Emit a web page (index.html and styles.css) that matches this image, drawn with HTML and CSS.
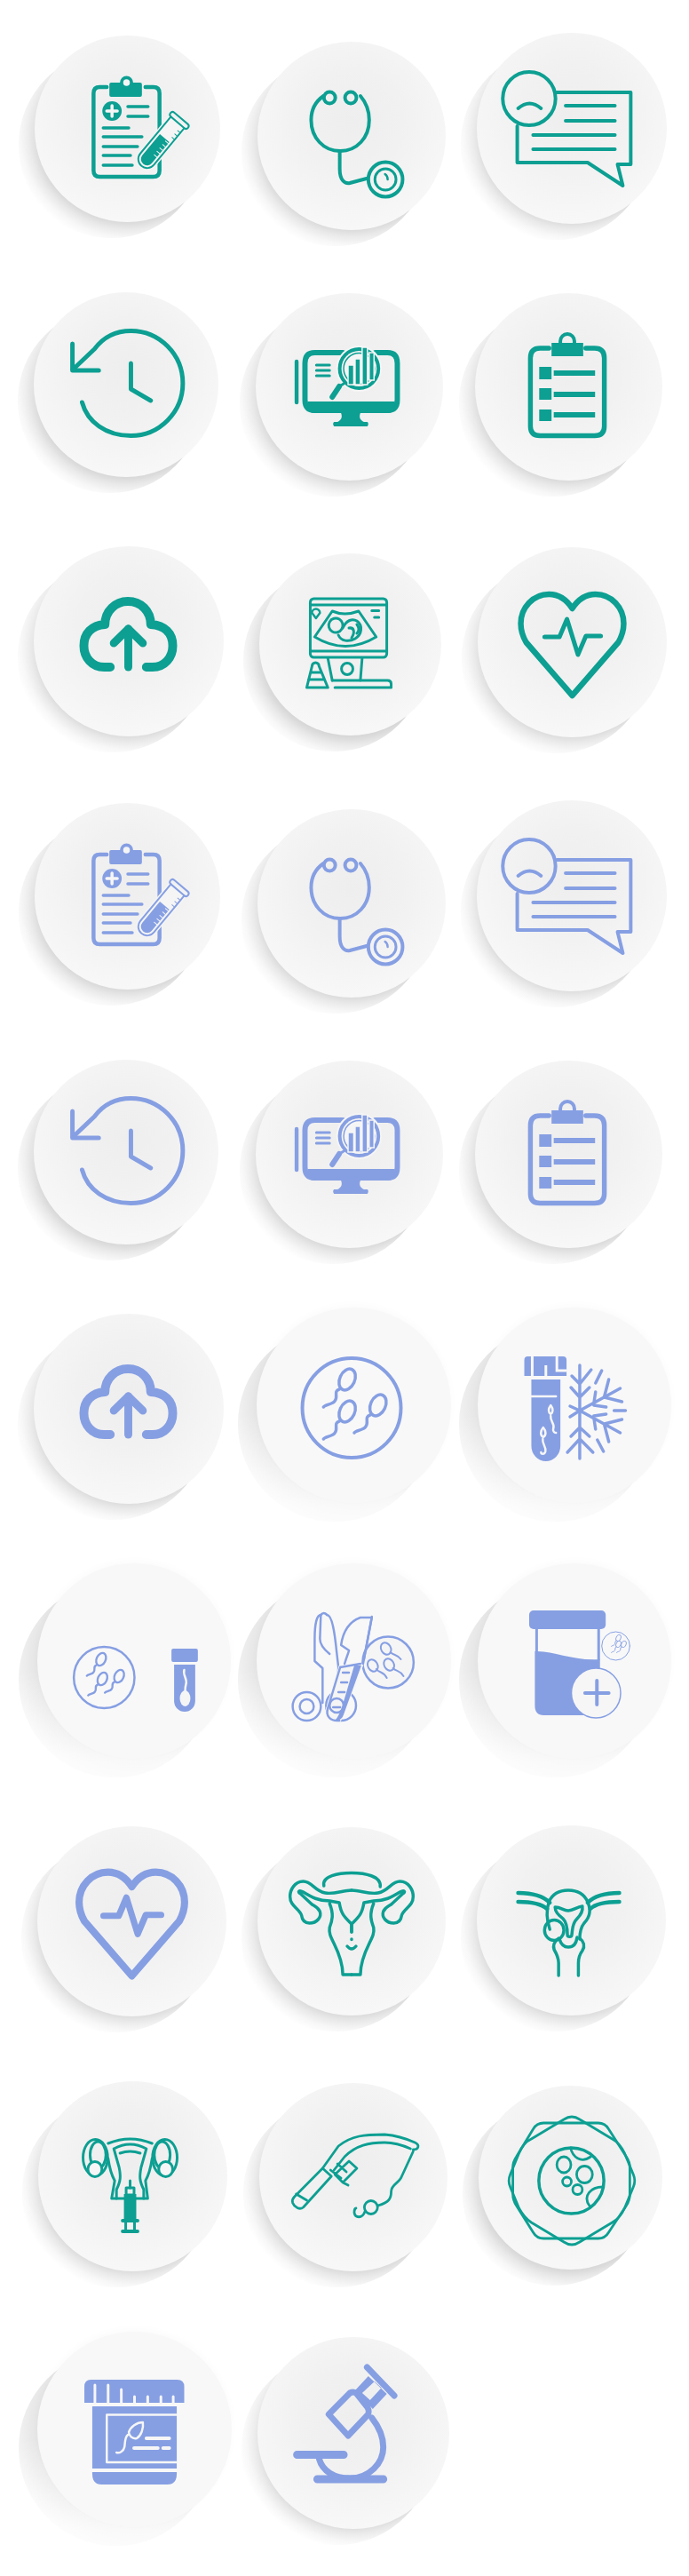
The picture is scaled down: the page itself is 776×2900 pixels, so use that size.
FILE: index.html
```html
<!DOCTYPE html>
<html lang="en">
<head>
<meta charset="utf-8">
<title>Icons</title>
<link rel="stylesheet" href="styles.css">
</head>
<body>
<svg class="defs" width="0" height="0" aria-hidden="true">
<defs>
  <g id="sperm" class="ln"><ellipse cx="0" cy="0" rx="8.5" ry="12.5" transform="rotate(25)"/><path d="M-9 11C-16 13-10 20-14 24C-16 28-25 28-27 31"/></g>

  <g id="clip">
    <path class="ln" stroke-width="4.500" d="M121 98H113Q106 98 106 105V192Q106 199 113 199H174Q181 199 181 192V105Q181 98 174 98H165"/>
    <rect class="fl" x="124" y="93" width="37" height="16" rx="2"/>
    <circle class="fl" cx="143.500" cy="93" r="7.500"/><circle class="bgf" cx="143.500" cy="93" r="3.800"/>
    <circle class="fl" cx="127" cy="125" r="11"/>
    <path class="wh" stroke-width="3.500" d="M127 119V131M121 125H133"/>
    <path class="ln" stroke-width="3.500" d="M145 120H168M145 131H168M117 144H146M117 154H161M117 165H156M117 175H148M117 186H150"/>
    <g transform="translate(203.500,135.500) rotate(40)">
      <path class="halo" stroke-width="5" d="M-10 3V57A10 10 0 0 0 10 57V3Z"/>
      <path class="ln" stroke-width="2" d="M-10 3V57A10 10 0 0 0 10 57V3"/>
      <path class="fl" d="M-7 26H7V57A7 7 0 0 1-7 57Z"/>
      <path class="wh" stroke-width="1" d="M3 28H7M3 33H7M3 38H7M3 43H7M3 48H7"/>
      <rect class="ln" stroke-width="2" x="-13" y="-3" width="26" height="6" rx="3"/>
      <path class="ln" stroke-width="1" d="M6 10H9M6 15H9M6 20H9"/>
    </g>
  </g>

  <g id="steth" class="ln" stroke-width="4">
    <circle cx="375" cy="110" r="6.500"/><circle cx="399" cy="110" r="6.500"/>
    <path d="M368 108C358 115 354 124 354 135C354 155 368 170 387 170C406 170 420 155 420 135C420 124 416 115 410 108"/>
    <path d="M386.500 170V190C386.500 203 392 207 398 206L417 201"/>
    <circle cx="438.500" cy="202" r="19.500"/><circle cx="438.500" cy="202" r="12" stroke-width="3"/>
    <path stroke-width="2.500" d="M438 196C441 198 441 200 441 202"/>
  </g>

  <g id="bubble" class="ln" stroke-width="4">
    <circle cx="601.500" cy="111" r="30"/>
    <path d="M589 122Q602 111 615 122"/>
    <path d="M633 104H717V185H702L708 209L668 183H588V142"/>
    <path d="M643 119H699M643 136H699M606 152H699M606 168H699"/>
  </g>

  <g id="hist" class="ln" stroke-width="5">
    <path d="M93 453C99 475 120 490.500 148.500 490.500C181 490.500 207.500 464 207.500 431.500C207.500 399 181 372.500 148.500 372.500C130 372.500 116 381 107 393L82.500 416"/>
    <path d="M82 387V417H112"/>
    <path d="M148.500 409V438L171 451"/>
  </g>

  <g id="mon">
    <path class="ln" stroke-width="6" d="M390 397H358Q347 397 347 409V450Q347 462 358 462H441Q452 462 452 450V409Q452 397 441 397H427"/>
    <path class="fl" d="M350 452H449V458Q449 465 441 465H358Q350 465 350 458Z"/>
    <path class="fl" d="M388 465H410C408 470 410 473 414 475H418Q420 477 418 480H380Q378 477 380 475H384C388 473 390 470 388 465Z"/>
    <path class="ln" stroke-width="4.500" d="M337.500 407V453"/>
    <path class="ln" stroke-width="3" d="M360 411H375M360 417H375M360 423H375"/>
    <circle class="halo fl2" cx="408.500" cy="415" r="25" stroke-width="2"/>
    <circle class="bgf" cx="408.500" cy="415" r="20"/>
    <circle class="ln" cx="408.500" cy="415" r="17.500" stroke-width="1.500"/>
    <path class="halo fl2" stroke-width="1.500" d="M396 411H402.500V433H396ZM404 404H410V433H404ZM412 391H418V433H412ZM420 397H425.500V428H420Z"/>
    <path class="ln" stroke-width="6" d="M386 435L378 447"/>
    <path class="ln" stroke-width="3" d="M391 432L386 435"/>
  </g>

  <g id="list">
    <path class="ln" stroke-width="5.500" d="M624 392H614Q603 392 603 403V480Q603 490.500 614 490.500H676Q687 490.500 687 480V403Q687 392 676 392H666"/>
    <rect class="fl" x="627" y="386" width="36" height="15"/>
    <path class="ln" stroke-width="4" d="M637 388V384A8 8 0 0 1 653 384V388"/>
    <path class="fl" d="M613 413H627V427H613ZM613 437H627V450H613ZM613 461H627V474H613ZM629.500 417H676.500V423H629.500ZM629.500 441H676.500V447H629.500ZM629.500 464H676.500V470H629.500Z"/>
  </g>

  <g id="cloud" class="ln">
    <path stroke-width="10" d="M125 751H118C104 751 95 740 95 727C95 713 104 704 119 703C119 688 131 677 145 677C160 677 171 688 171 703C187 704 196 713 196 727C196 740 187 751 173 751H166"/>
    <path stroke-width="9" d="M145.500 751V708"/>
    <path stroke-width="9" d="M129 724L145.500 708L162 724"/>
  </g>

  <g id="heart" class="ln">
    <path class="heart-line" d="M650.500 685C644 675 635 669 624 669C606 669 592 684 592 702C592 710 594 716 598 723L650.500 783L703 723C707 716 709 710 709 702C709 684 695 669 677 669C666 669 657 675 650.500 685Z"/>
    <path class="heart-pulse" d="M619 717H636L644.500 697L657 737L666 716H683"/>
  </g>
</defs>
</svg>

<main class="board">
  <div class="tile r1c1"><div class="face"><svg class="ico teal" preserveAspectRatio="none" viewBox="39 40 211 210"><use href="#clip"/></svg></div></div>
  <div class="tile r1c2"><div class="face"><svg class="ico teal" preserveAspectRatio="none" viewBox="293 47 214 212"><use href="#steth"/></svg></div></div>
  <div class="tile r1c3"><div class="face"><svg class="ico teal" preserveAspectRatio="none" viewBox="542 37 216 215"><use href="#bubble"/></svg></div></div>

  <div class="tile r2c1"><div class="face"><svg class="ico teal" preserveAspectRatio="none" viewBox="38 329 210 208"><use href="#hist"/></svg></div></div>
  <div class="tile r2c2"><div class="face"><svg class="ico teal" preserveAspectRatio="none" viewBox="291 330 213 211"><use href="#mon"/></svg></div></div>
  <div class="tile r2c3"><div class="face"><svg class="ico teal" preserveAspectRatio="none" viewBox="540 330 213 211"><use href="#list"/></svg></div></div>

  <div class="tile r3c1"><div class="face"><svg class="ico teal" preserveAspectRatio="none" viewBox="38 615 216 214"><use href="#cloud"/></svg></div></div>
  <div class="tile r3c2"><div class="face"><svg class="ico teal" preserveAspectRatio="none" viewBox="295 623 207 205">
    <g class="ln" stroke-width="3">
      <rect x="353" y="674" width="87" height="66" rx="4"/>
      <path d="M353 681H440M353 733H440"/>
      <path d="M378 688Q392 694 408 688L428 717Q393 738 358 717Z"/>
      <ellipse cx="382" cy="704" rx="8" ry="8" transform="rotate(30 382 704)"/>
      <path d="M390 707C394 698 401 696 406 699C413 704 412 714 404 719C397 723 388 722 385 715"/>
      <path d="M397 707C403 706 404 712 400 718M406 703C410 708 408 711 406 713"/>
      <path d="M355 690A4 4 0 0 1 364 690L359.500 696Z" stroke-width="2.500"/>
      <path d="M423 687.500H431M426 695H431"/>
      <path d="M373 741L378 766M412 741L410 766"/>
      <circle cx="395" cy="753" r="6.500"/>
      <path d="M378 766H441Q445 766 445 770V774H381"/>
      <path d="M349 774L355 750A4 4 0 0 1 363 750L373 774ZM354 757H364M351 765H369"/>
    </g>
  </svg></div></div>
  <div class="tile r3c3"><div class="face"><svg class="ico teal" preserveAspectRatio="none" viewBox="543 616 215 214"><use href="#heart"/></svg></div></div>

  <div class="tile r4c1"><div class="face"><svg class="ico blue" preserveAspectRatio="none" viewBox="39 904 211 210"><use href="#clip" transform="translate(0,864)"/></svg></div></div>
  <div class="tile r4c2"><div class="face"><svg class="ico blue" preserveAspectRatio="none" viewBox="293 911 214 212"><use href="#steth" transform="translate(0,864)"/></svg></div></div>
  <div class="tile r4c3"><div class="face"><svg class="ico blue" preserveAspectRatio="none" viewBox="542 901 216 215"><use href="#bubble" transform="translate(0,864)"/></svg></div></div>

  <div class="tile r5c1"><div class="face"><svg class="ico blue" preserveAspectRatio="none" viewBox="38 1193 210 208"><use href="#hist" transform="translate(0,864)"/></svg></div></div>
  <div class="tile r5c2"><div class="face"><svg class="ico blue" preserveAspectRatio="none" viewBox="291 1194 213 211"><use href="#mon" transform="translate(0,864)"/></svg></div></div>
  <div class="tile r5c3"><div class="face"><svg class="ico blue" preserveAspectRatio="none" viewBox="540 1194 213 211"><use href="#list" transform="translate(0,864)"/></svg></div></div>

  <div class="tile r6c1"><div class="face"><svg class="ico blue" preserveAspectRatio="none" viewBox="38 1479 216 214"><use href="#cloud" transform="translate(0,864)"/></svg></div></div>
  <div class="tile r6c2 flat"><div class="face"><svg class="ico blue" preserveAspectRatio="none" viewBox="292 1472 221 220">
    <circle class="ln" cx="400" cy="1585" r="56" stroke-width="4"/>
    <use href="#sperm" x="395" y="1553" stroke-width="3.500"/>
    <use href="#sperm" x="395" y="1589" stroke-width="3.500"/>
    <use href="#sperm" x="430" y="1582" stroke-width="3.500"/>
  </svg></div></div>
  <div class="tile r6c3 flat"><div class="face"><svg class="ico blue" preserveAspectRatio="none" viewBox="543 1472 220 220">
    <path class="fl" d="M600 1527H640Q644 1527 644 1531V1549H596V1531Q596 1527 600 1527Z"/>
    <path class="slit" stroke-width="3" d="M605 1527V1549M620.500 1537V1549M633 1527V1543H644"/>
    <path class="fl" d="M604 1553H637V1628A16.500 17 0 0 1 604 1628Z"/>
    <g class="wh" stroke-width="2.500">
      <path d="M604 1572H632"/>
      <path d="M626 1582C623 1586 623 1590 626 1592C629 1590 629 1586 626 1582Z"/>
      <path d="M626 1594C625 1600 631 1603 629 1608C628 1611 630 1613 632 1613"/>
      <path d="M617.500 1607C614 1611 614 1616 617.500 1618C621 1616 621 1611 617.500 1607Z"/>
      <path d="M617 1620C616 1626 621 1628 620 1634C619 1638 615 1637 615 1635"/>
    </g>
    <g class="ln" stroke-width="3.500">
      <path d="M659 1537V1642M650 1549L659 1558L672 1542M649 1562L659 1573L670 1562M645 1635L659 1620L674 1635M649 1617L659 1607L670 1617"/>
      <path d="M648 1583L659 1588L648 1595"/>
      <path d="M659 1588L705 1563M692 1553L687 1572M677 1567L675 1580M687 1573L707 1578M675 1582L689 1584"/>
      <path d="M659 1588L705 1613M692 1623L687 1604M677 1609L675 1596M687 1603L707 1598M675 1594L689 1592"/>
      <path d="M698 1588H711M684 1543L677 1557M679 1621L686 1634"/>
    </g>
  </svg></div></div>

  <div class="tile r7c1 flat"><div class="face"><svg class="ico blue" preserveAspectRatio="none" viewBox="42 1760 220 220">
    <circle class="ln" cx="118" cy="1888.500" r="34.500" stroke-width="2.500"/>
    <use href="#sperm" transform="translate(114.500,1868) scale(.6)" stroke-width="4"/>
    <use href="#sperm" transform="translate(116,1890) scale(.6)" stroke-width="4"/>
    <use href="#sperm" transform="translate(135,1887) scale(.6)" stroke-width="4"/>
    <rect class="fl" x="194.500" y="1856" width="30" height="15" rx="2"/>
    <path class="fl" d="M197.500 1874H221.500V1915A12 12 0 0 1 197.500 1915Z"/>
    <ellipse class="bgf" cx="210" cy="1912" rx="6" ry="9"/>
    <path class="wh" stroke-width="2.500" d="M209 1880C207 1886 213 1890 211 1896C210 1899 210 1901 210 1905"/>
  </svg></div></div>
  <div class="tile r7c2 flat"><div class="face"><svg class="ico blue" preserveAspectRatio="none" viewBox="292 1760 221 220">
    <g class="ln" stroke-width="2.500">
      <circle cx="388" cy="1920" r="17"/>
      <path d="M365 1818C360 1818 358 1830 358 1845V1870L367 1878V1917"/>
      <path d="M365 1818L364 1845C364 1852 370 1858 375 1862"/>
      <path d="M372 1818C378 1818 381 1840 383 1860L385 1877C385 1890 381 1905 375 1925"/>
      <circle cx="349" cy="1921" r="16"/><circle cx="349" cy="1921" r="8"/>
      <path d="M365 1818Q368 1814 372 1818"/>
    </g>
    <circle class="bgf" cx="441.500" cy="1871.500" r="30"/>
    <circle class="ln" cx="441.500" cy="1871.500" r="29" stroke-width="2.500"/>
    <g class="ln" stroke-width="2">
      <ellipse cx="439" cy="1856" rx="5.500" ry="7" transform="rotate(-30 439 1856)"/><path d="M444 1860C448 1864 452 1862 456 1868"/>
      <ellipse cx="442.500" cy="1874" rx="5.500" ry="7" transform="rotate(-30 442.500 1874)"/><path d="M447 1878C451 1882 455 1880 459 1887"/>
      <ellipse cx="424" cy="1875" rx="5.500" ry="7" transform="rotate(-30 424 1875)"/><path d="M428 1879C432 1884 436 1881 440 1889"/>
    </g>
    <path class="halo" stroke-width="4" d="M387 1877L373 1923C370 1932 376 1938 386 1937L411 1875Z"/>
    <g class="ln" stroke-width="2.500">
      <path d="M392 1873C394 1866 396 1862 397 1858L388 1852C390 1838 396 1826 410 1821H423L413 1873"/>
      <path d="M423 1820L414 1868"/>
      <path d="M387 1877L410 1873"/>
      <path d="M387 1877L373 1923C370 1932 376 1938 386 1937"/>
      <circle cx="383" cy="1920" r="8"/>
      <path d="M390 1883H397M388 1894H395M385 1905H392M379 1922H387"/>
    </g>
    <path class="fl" d="M403 1875H411L391 1930C389 1936 385 1937 381 1937C388 1930 391 1915 403 1875Z"/>
  </svg></div></div>
  <div class="tile r7c3 flat"><div class="face"><svg class="ico blue" preserveAspectRatio="none" viewBox="543 1760 220 220">
    <path class="ln" stroke-width="3" d="M610 1834V1860M680.500 1834V1868"/>
    <rect class="fl" x="601.500" y="1813" width="87" height="21" rx="5"/>
    <path class="fl" d="M608 1859C630 1858 650 1870 682 1868V1920Q682 1931 672 1931H618Q608 1931 608 1920Z"/>
    <circle class="bgf2" cx="677.500" cy="1906" r="28" stroke-width="1.500"/>
    <path class="ln" stroke-width="4" d="M665 1906H692M678.500 1892V1919"/>
    <circle class="ln" cx="700" cy="1853" r="16" stroke-width="1"/>
    <use href="#sperm" transform="translate(703,1844) scale(.3)" stroke-width="3"/>
    <use href="#sperm" transform="translate(703,1851) scale(.3)" stroke-width="3"/>
    <use href="#sperm" transform="translate(709,1851) scale(.3)" stroke-width="3"/>
  </svg></div></div>

  <div class="tile r8c1"><div class="face"><svg class="ico blue thick" preserveAspectRatio="none" viewBox="42 2056 215 214"><use href="#heart" transform="translate(150,2166) scale(1.025) translate(-651,-726)"/></svg></div></div>
  <div class="tile r8c2"><div class="face"><svg class="ico teal" preserveAspectRatio="none" viewBox="293 2057 214 212">
    <g class="ln" stroke-width="3.500">
      <path d="M400 2128C390 2128 380 2133 370 2131C358 2129 355 2118 345 2118C335 2118 330 2128 330 2135C330 2146 340 2148 343 2156C344 2163 348 2165 352 2165C361 2165 366 2158 364 2152C362 2147 358 2146 355 2144L342 2132C338 2130 340 2127 345 2130C355 2136 362 2140 375 2140L386 2142C388 2155 392 2158 400 2166V2175M375 2143C380 2155 378 2162 375 2170C374 2176 376 2180 380 2188C386 2200 390 2210 390 2223H400"/>
      <g transform="translate(800,0) scale(-1,1)">
        <path d="M400 2128C390 2128 380 2133 370 2131C358 2129 355 2118 345 2118C335 2118 330 2128 330 2135C330 2146 340 2148 343 2156C344 2163 348 2165 352 2165C361 2165 366 2158 364 2152C362 2147 358 2146 355 2144L342 2132C338 2130 340 2127 345 2130C355 2136 362 2140 375 2140L386 2142C388 2155 392 2158 400 2166V2175M375 2143C380 2155 378 2162 375 2170C374 2176 376 2180 380 2188C386 2200 390 2210 390 2223H400"/>
      </g>
      <path d="M368.500 2123C366 2112 385 2108.500 400 2108.500C415 2108.500 434 2112 432.500 2124"/>
      <path d="M400 2183V2183.500M395 2191Q400 2197 405 2191"/>
    </g>
  </svg></div></div>
  <div class="tile r8c3"><div class="face"><svg class="ico teal" preserveAspectRatio="none" viewBox="542 2055 215 214">
    <g class="ln" stroke-width="3.500">
      <path stroke-width="4.500" d="M589 2131C605 2131 618 2135 625 2142M589 2141C605 2141 615 2143 622 2149M704 2131C688 2131 675 2135 668 2142M704 2141C688 2141 677 2143 671 2149"/>
      <path d="M625 2172C621 2160 621 2150 624 2141C628 2132 636 2128 646 2128C656 2128 664 2132 668 2141C672 2150 671 2158 664 2165C660 2170 659 2177 659 2183"/>
      <path d="M631 2147C638 2147 640 2151 646 2151C652 2151 655 2147 662 2146C663 2152 660 2156 656 2160C650 2166 651 2172 650 2178C650 2181 645 2181 645 2178C645 2170 644 2164 640 2160C634 2155 631 2152 631 2147Z"/>
      <ellipse cx="630" cy="2173" rx="11" ry="11.500"/>
      <path d="M636 2183C638 2190 642 2192 646 2192C651 2192 655 2189 656 2181"/>
      <path d="M635 2182C630 2186 628 2190 630 2195C633 2200 635 2204 635 2210V2224M659 2182C664 2186 665 2191 662 2196C659 2200 657.500 2204 657.500 2210V2224"/>
    </g>
  </svg></div></div>

  <div class="tile r9c1"><div class="face"><svg class="ico teal" preserveAspectRatio="none" viewBox="43 2343 215 214">
    <g class="ln" stroke-width="3">
      <path d="M122.500 2413Q147.500 2403 172.500 2413"/>
      <ellipse cx="108" cy="2429" rx="14" ry="20.500"/><ellipse cx="111" cy="2426" rx="9" ry="15"/>
      <ellipse class="bgf2" cx="107.500" cy="2442" rx="8" ry="8.500"/>
      <ellipse cx="187" cy="2429" rx="14" ry="20.500"/><ellipse cx="184" cy="2426" rx="9" ry="15"/>
      <ellipse class="bgf2" cx="188" cy="2442" rx="8" ry="8.500"/>
      <path d="M122.500 2430C124 2440 126 2448 130 2455L126.500 2475H167.500L165 2455C169 2448 171 2440 172.500 2430"/>
      <path d="M129 2419Q147.500 2409 166 2419L160 2440C158 2450 158 2455 163 2465V2475M129 2419L135 2440C137 2450 137 2455 132 2465V2475"/>
      <path d="M136 2424Q147.500 2420 159 2424"/>
      <path d="M147.500 2455V2463"/>
      <rect x="143" y="2463" width="9" height="8"/>
      <path stroke-width="4" d="M139 2500H156M139 2512H156"/>
      <path d="M142.500 2500V2512M152.500 2500V2512"/>
    </g>
    <rect class="fl" x="140.500" y="2470" width="14" height="30"/>
  </svg></div></div>
  <div class="tile r9c2"><div class="face"><svg class="ico teal" preserveAspectRatio="none" viewBox="295 2345 214 212">
    <g class="ln" stroke-width="2.800">
      <path d="M367 2441L385 2416C400 2404 415 2403 437.500 2403C450 2404 463 2408 472 2412C478 2415 476 2420 470 2420"/>
      <path d="M380 2443L392 2428C405 2415 420 2412 437.500 2412C448 2412 458 2415 467 2419"/>
      <path d="M367 2441L377 2450L345 2485C341 2488 335 2485 333 2480C332 2477 333 2475 335 2473Z"/>
      <path d="M337 2470L349 2477"/>
      <path d="M397 2433L406 2441L390 2457L381 2448ZM376 2443L388 2452M384 2436L394 2445M390 2457L396 2460"/>
      <path d="M470 2422L457 2450C454 2458 445 2459 445 2467C445 2475 443 2479 430 2483"/>
      <circle cx="422" cy="2485" r="7.500"/>
      <path d="M415 2490C412 2498 404 2497 403 2491C403 2488 404 2486 405 2486"/>
    </g>
  </svg></div></div>
  <div class="tile r9c3"><div class="face"><svg class="ico teal" preserveAspectRatio="none" viewBox="544 2348 209 207">
    <g class="ln" stroke-width="2.800">
      <path d="M641 2386Q650 2380 659 2386L696 2408Q704 2412 710 2424L720 2448Q723 2455 720 2462L710 2486Q705 2497 696 2502L659 2524Q650 2530 641 2524L604 2502Q596 2497 590 2486L580 2462Q577 2455 580 2448L590 2424Q595 2412 604 2408Z"/>
      <path d="M618 2390H680Q688 2390 692 2397L712 2428Q716 2434 716 2440V2470Q716 2477 712 2483L692 2513Q688 2520 680 2520H618Q610 2520 606 2513L587 2483Q583 2477 583 2470V2440Q583 2434 587 2428L606 2397Q610 2390 618 2390Z"/>
      <circle cx="649.500" cy="2455" r="37" stroke-width="3.500"/>
      <path d="M648.500 2418C651 2428 660 2436 671.500 2428"/>
      <path d="M685 2462C672 2462 662 2472 670 2483"/>
      <ellipse cx="641" cy="2437" rx="8" ry="9"/>
      <ellipse cx="664.500" cy="2448" rx="9" ry="9.500"/>
      <circle cx="644.500" cy="2456" r="5"/>
      <circle cx="656.500" cy="2465" r="5.500"/>
    </g>
  </svg></div></div>

  <div class="tile r10c1 flat"><div class="face"><svg class="ico blue" preserveAspectRatio="none" viewBox="42 2625 221 220">
    <path class="fl" d="M103 2679H201Q209 2679 209 2687V2705H95.500V2687Q95.500 2679 103 2679Z"/>
    <path class="wh" stroke-width="3" d="M107.500 2706V2685M122.500 2706V2685M137.500 2706V2690M152.500 2706V2698M167.500 2706V2698M182.500 2706V2698M196.500 2706V2698"/>
    <path class="fl" d="M104.500 2709H200.500V2779H104.500ZM104.500 2783H200.500V2785Q200.500 2797 190 2797H115Q104.500 2797 104.500 2785Z"/>
    <path class="wh" stroke-width="2.500" d="M201 2718.500H121V2772H201"/>
    <g class="wh" stroke-width="2.500">
      <path d="M162 2727C155 2727 148 2732 146 2738C146 2742 150 2746 155 2745C160 2742 163 2734 162 2727Z"/>
      <path d="M145 2741C141 2744 142 2751 141 2755C140 2760 135 2762 132 2761"/>
    </g>
    <path class="wh" stroke-width="4" d="M166 2745H192M152 2756H179M185 2756H192"/>
  </svg></div></div>
  <div class="tile r10c2"><div class="face"><svg class="ico blue" preserveAspectRatio="none" viewBox="293 2631 218 216">
    <path class="fl" d="M419 2675L404 2691L424 2712L440 2695ZM426 2681L412 2694L421 2702L434 2688Z" fill-rule="evenodd"/>
    <g class="ln" stroke-width="7">
      <path d="M417.500 2665L448.500 2697"/>
      <path d="M398 2694C402 2692 404 2693 406 2695L418 2710C420 2714 420 2716 418 2719L396 2742L374 2718Z"/>
      <path d="M423 2722C431 2732 436 2743 436 2755C436 2773 420 2790 398 2790C380 2790 367 2782 363 2768"/>
      <path stroke-width="9" d="M338 2763.500H391M361 2791H436"/>
    </g>
  </svg></div></div>
</main>
</body>
</html>
```
FILE: styles.css
```css
html, body { margin: 0; padding: 0; background: #fff; }
.defs { position: absolute; }
.board {
  display: grid;
  grid-template-columns: 268px 252px 256px;
  grid-template-rows: repeat(10, 290px);
  width: 776px;
  height: 2900px;
  overflow: hidden;
}
.tile { position: relative; align-self: start; justify-self: start; }
.tile::before {
  content: "";
  position: absolute;
  left: -18px;
  top: 18px;
  width: 100%;
  height: 100%;
  border-radius: 50%;
  background:
    linear-gradient(to bottom, rgba(255, 255, 255, .45) 15%, rgba(255, 255, 255, 0) 70%),
    radial-gradient(circle 131px at calc(50% + 18px) calc(50% - 18px), #d6d6d6 78%, #dcdcdc 81%, #e9e9e9 86%, #f7f7f7 93%, #ffffff 100%);
}
.tile.flat::before {
  left: -21px;
  top: 21px;
  background:
    linear-gradient(to bottom, rgba(255, 255, 255, 0) 45%, rgba(255, 255, 255, .75) 92%),
    radial-gradient(circle 145px at calc(50% + 21px) calc(50% - 21px), #e4e4e4 74%, #eaeaea 82%, #fafafa 100%);
}
.face {
  position: relative;
  width: 100%;
  height: 100%;
  border-radius: 50%;
  background: radial-gradient(circle at 50% 42%, #eeeeee 0, #f1f1f1 35%, #f8f8f8 78%);
}
.flat .face { background: #f8f8f8; box-shadow: 0 -3px 10px rgba(0, 0, 0, .02); }
.ico { display: block; width: 100%; height: 100%; overflow: visible; }
.teal { color: #0c9f92; }
.blue { color: #869fe3; }
.thick { --heart-w: 8px; --pulse-w: 7px; }
.ln { fill: none; stroke: currentColor; stroke-linecap: round; stroke-linejoin: round; }
.heart-line { stroke-width: var(--heart-w, 6.5px); }
.heart-pulse { stroke-width: var(--pulse-w, 5px); }
.fl { fill: currentColor; }
.wh { fill: none; stroke: #f6f6f6; stroke-linecap: round; stroke-linejoin: round; }
.slit { fill: none; stroke: #f8f8f8; }
.bgf { fill: #f5f5f5; }
.bgf2 { fill: #f6f6f6; stroke: currentColor; }
.halo { fill: #f5f5f5; stroke: #f5f5f5; }
.fl2 { fill: currentColor; }
.r1c1, .r4c1 { width: 209px; height: 210px; margin-left: 39px; }
.r1c2, .r4c2 { width: 212px; height: 212px; margin-left: 22px; }
.r1c3, .r4c3 { width: 214px; height: 215px; margin-left: 17px; }
.r2c1, .r5c1 { width: 208px; height: 208px; margin-left: 38px; }
.r2c2, .r5c2 { width: 211px; height: 211px; margin-left: 20px; }
.r2c3, .r5c3 { width: 211px; height: 211px; margin-left: 15px; }
.r3c1, .r6c1 { width: 214px; height: 214px; margin-left: 38px; }
.r3c2 { width: 205px; height: 205px; margin-left: 24px; }
.r3c3 { width: 213px; height: 214px; margin-left: 18px; }
.r6c2 { width: 219px; height: 220px; margin-left: 21px; }
.r6c3 { width: 218px; height: 220px; margin-left: 18px; }
.r7c1 { width: 218px; height: 220px; margin-left: 42px; }
.r7c2 { width: 219px; height: 220px; margin-left: 21px; }
.r7c3 { width: 218px; height: 220px; margin-left: 18px; }
.r8c1 { width: 213px; height: 214px; margin-left: 42px; }
.r8c2 { width: 212px; height: 212px; margin-left: 22px; }
.r8c3 { width: 213px; height: 214px; margin-left: 17px; }
.r9c1 { width: 213px; height: 214px; margin-left: 43px; }
.r9c2 { width: 212px; height: 212px; margin-left: 24px; }
.r9c3 { width: 207px; height: 207px; margin-left: 19px; }
.r10c1 { width: 219px; height: 220px; margin-left: 42px; }
.r10c2 { width: 216px; height: 216px; margin-left: 22px; }
.r1c1 { margin-top: 40px; } .r1c2 { margin-top: 47px; } .r1c3 { margin-top: 37px; }
.r2c1 { margin-top: 39px; } .r2c2 { margin-top: 40px; } .r2c3 { margin-top: 40px; }
.r3c1 { margin-top: 35px; } .r3c2 { margin-top: 43px; } .r3c3 { margin-top: 36px; }
.r4c1 { margin-top: 34px; } .r4c2 { margin-top: 41px; } .r4c3 { margin-top: 31px; }
.r5c1 { margin-top: 33px; } .r5c2 { margin-top: 34px; } .r5c3 { margin-top: 34px; }
.r6c1 { margin-top: 29px; } .r6c2 { margin-top: 22px; } .r6c3 { margin-top: 22px; }
.r7c1 { margin-top: 20px; } .r7c2 { margin-top: 20px; } .r7c3 { margin-top: 20px; }
.r8c1 { margin-top: 26px; } .r8c2 { margin-top: 27px; } .r8c3 { margin-top: 25px; }
.r9c1 { margin-top: 23px; } .r9c2 { margin-top: 25px; } .r9c3 { margin-top: 28px; }
.r10c1 { margin-top: 15px; } .r10c2 { margin-top: 21px; }
```
